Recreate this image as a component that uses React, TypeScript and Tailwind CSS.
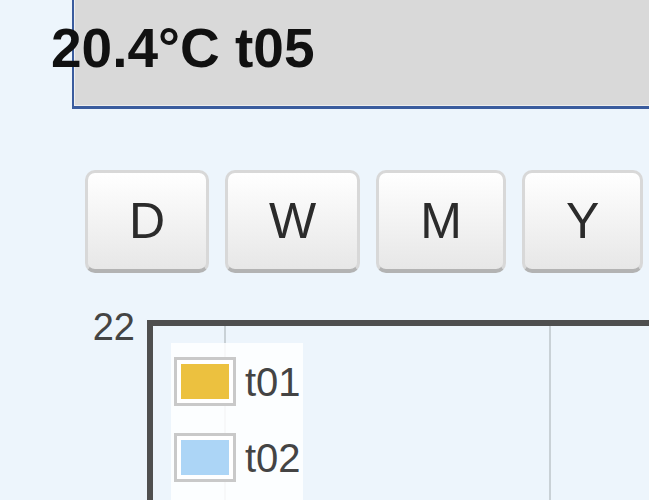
import type { FC } from "react";

const ranges = ["D", "W", "M", "Y"];

const series = [
  { name: "t01", color: "bg-[#ecc13f]" },
  { name: "t02", color: "bg-[#acd5f6]" },
];

const RangeButton: FC<{ label: string }> = ({ label }) => (
  <button className="flex h-[103px] items-center justify-center rounded-[10px] border-[3px] border-b-[4px] border-[#d8d8d8] border-b-[#b3b3b3] bg-gradient-to-b from-white to-[#e7e7e7] px-[41px] text-[50px] leading-none text-[#2b2b2b]">
    {label}
  </button>
);

const App: FC = () => {
  return (
    <div className="relative h-[500px] w-[649px] overflow-hidden bg-[#edf5fc] font-['Liberation_Sans',Arial,sans-serif]">
      <div className="ml-[72px] h-[109px] border-b-[3px] border-l-[2px] border-[#3a5c9e] bg-[#d9d9d9] shadow-[inset_1px_-1px_0_#eeeeee]">
        <div className="-ml-[23px] pt-[21px] text-[55px] font-bold leading-none whitespace-nowrap text-[#111]">
          20.4°C t05
        </div>
      </div>

      <div className="mt-[61px] ml-[85px] flex gap-[16px]">
        {ranges.map((r) => (
          <RangeButton key={r} label={r} />
        ))}
      </div>

      <div className="mt-[35px] flex">
        <div className="w-[147px] pr-[12px] text-right text-[38px] leading-none text-[#444]">
          22
        </div>
        <div className="relative mt-[12px] h-[300px] flex-1 border-l-[6px] border-t-[6px] border-[#4f4f4f]">
          <div className="absolute top-0 bottom-0 left-[71px] w-[2px] bg-[#c9d1d6]" />
          <div className="absolute top-0 bottom-0 left-[396px] w-[2px] bg-[#c9d1d6]" />
          <div className="absolute top-[17px] left-[18px] flex h-[300px] w-[132px] flex-col gap-[27px] bg-white/85 pt-[14px] pl-[3px]">
            {series.map((s) => (
              <div key={s.name} className="flex items-center gap-[9px]">
                <div className="h-[49px] w-[62px] border-[3px] border-[#c9c9c9] bg-white p-[4px]">
                  <div className={`h-full w-full ${s.color}`} />
                </div>
                <span className="text-[40px] leading-none text-[#444]">{s.name}</span>
              </div>
            ))}
          </div>
        </div>
      </div>
    </div>
  );
};

export default App;
